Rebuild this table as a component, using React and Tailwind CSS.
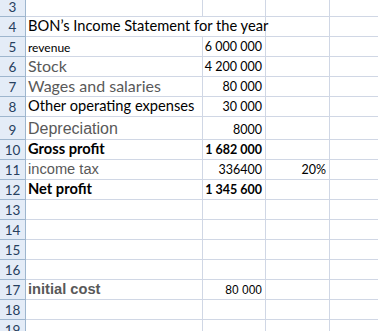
import React from 'react';

const calibri = 'font-["Lato","Liberation_Sans",sans-serif]';
const arial = 'font-["Liberation_Sans",Arial,sans-serif]';

// numbers in Calibri are narrower than Lato, so a smaller size
const num = `${calibri} text-[12.5px] text-black`;
const numBold = `${calibri} text-[12.5px] font-bold text-black`;

// spreadsheet rows, 3..19
const rows = [
  { n: 3, h: 'h-[17px]' },
  { n: 4, a: 'BON’s Income Statement for the year', overflow: true },
  { n: 5, a: 'revenue', aCls: `${calibri} text-[12px] text-black`, b: '6 000 000' },
  { n: 6, a: 'Stock', aCls: `${calibri} text-[16px] text-[#595959]`, b: '4 200 000' },
  { n: 7, a: 'Wages and salaries', aCls: `${calibri} text-[16px] text-[#595959]`, b: '80 000' },
  { n: 8, a: 'Other operating expenses', b: '30 000' },
  { n: 9, h: 'h-[23px]', a: 'Depreciation', aCls: `${arial} text-[16px] text-[#595959]`, b: '8000' },
  { n: 10, a: 'Gross profit', aCls: `${calibri} text-[14.67px] font-bold text-black`, b: '1 682 000', bCls: numBold },
  { n: 11, a: 'income tax', aCls: `${arial} text-[14.67px] text-[#595959]`, b: '336400', c: '20%' },
  { n: 12, a: 'Net profit', aCls: `${calibri} text-[14.67px] font-bold text-black`, b: '1 345 600', bCls: numBold },
  { n: 13 },
  { n: 14 },
  { n: 15 },
  { n: 16 },
  { n: 17, a: 'initial cost', aCls: `${arial} text-[14.67px] font-bold text-[#595959]`, b: '80 000', bCls: `${arial} text-[12px] text-black` },
  { n: 18 },
  { n: 19 },
];

const base = `${calibri} text-[14.67px] text-black`;

const Row = ({ r }) => (
  <div className={`flex ${r.h || 'h-[20px]'} shrink-0`}>
    <div className={`w-[26px] shrink-0 flex items-end justify-center pb-[2px] bg-[#e4ecf7] border-r border-b border-[#9eb6ce] ${calibri} text-[13.5px] leading-none text-[#27405e]`}>
      {r.n}
    </div>
    <div className={`w-[177px] shrink-0 flex items-end pl-[2px] pb-[2px] border-b border-[#d0d7e5] whitespace-nowrap ${r.overflow ? 'overflow-visible z-10' : 'border-r overflow-hidden'} ${r.aCls || base} leading-none`}>
      {r.a}
    </div>
    <div className={`w-[63px] shrink-0 flex items-end justify-end pr-[3px] pb-[3px] border-r border-b border-[#d0d7e5] whitespace-nowrap ${r.bCls || num} leading-none`}>
      {r.b}
    </div>
    <div className={`w-[64px] shrink-0 flex items-end justify-end pr-[3px] pb-[3px] border-r border-b border-[#d0d7e5] whitespace-nowrap ${num} leading-none`}>
      {r.c}
    </div>
    <div className="flex-1 border-b border-[#d0d7e5]" />
  </div>
);

export default function App() {
  return (
    <div className="w-[378px] h-[331px] overflow-hidden bg-white flex flex-col">
      {rows.map((r) => (
        <Row key={r.n} r={r} />
      ))}
    </div>
  );
}
